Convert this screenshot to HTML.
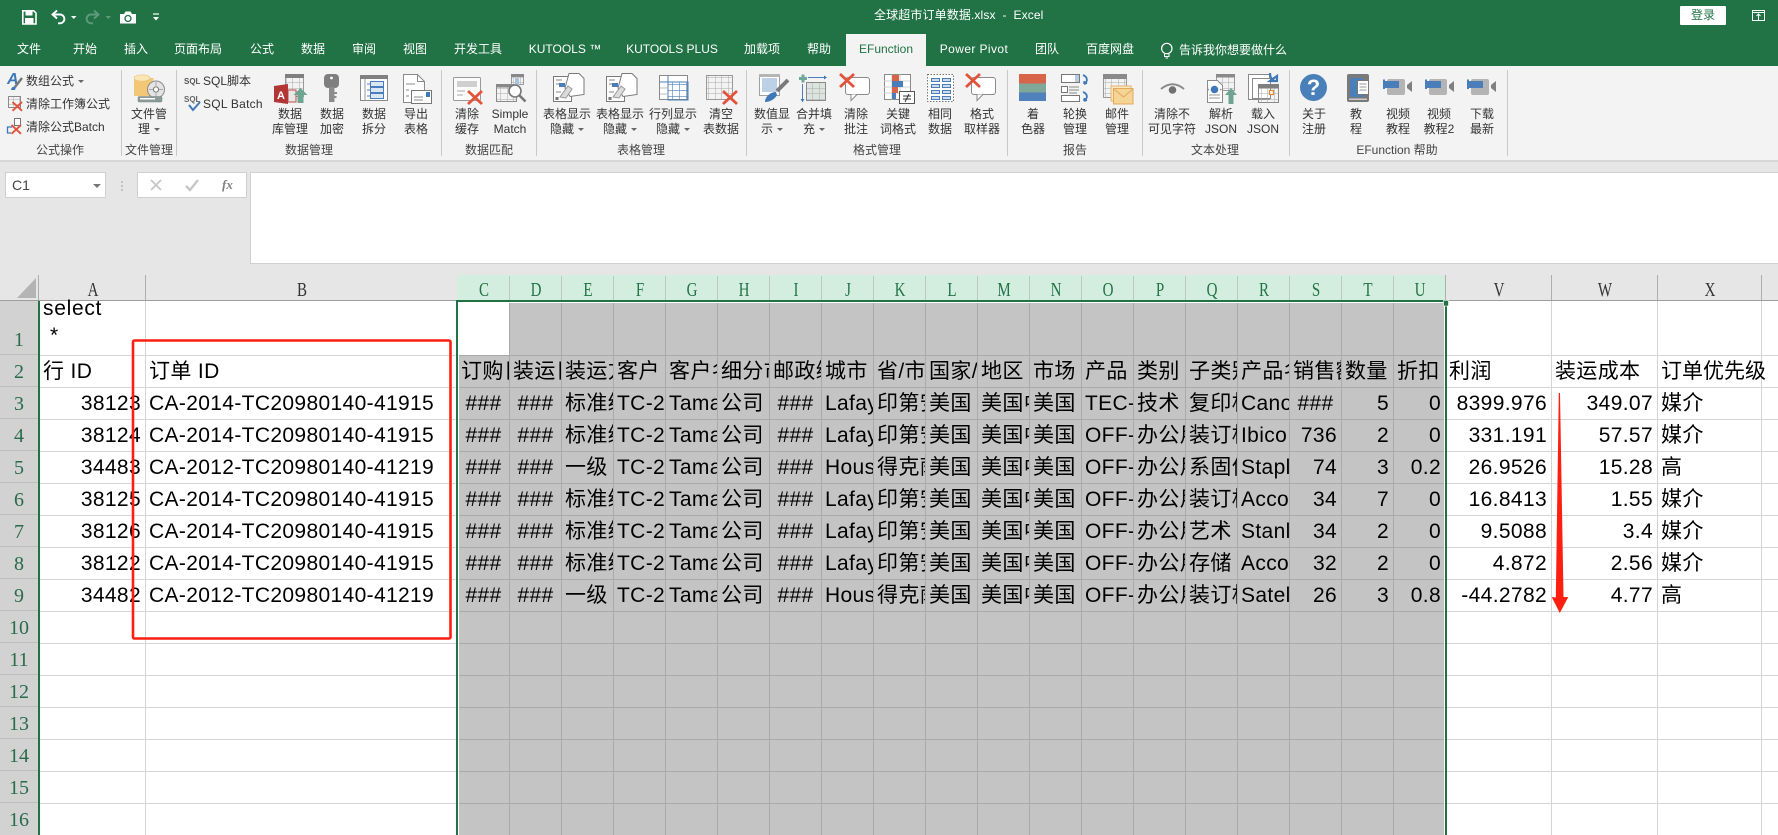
<!DOCTYPE html>
<html lang="zh"><head><meta charset="utf-8"><title>全球超市订单数据.xlsx - Excel</title>
<style>
html,body{margin:0;padding:0;width:1778px;height:835px;overflow:hidden;background:#fff}
body{position:relative;font-family:"Liberation Sans","Noto Sans CJK SC",sans-serif;color:#000}
.abs,.t,.b,.g,.s{position:absolute}
svg{position:absolute;left:0;top:0}
.t{top:40px;line-height:18px;font-size:12px;color:#fff;white-space:nowrap;transform:translateX(-50%)}
.b{top:107px;width:80px;margin-left:-40px;text-align:center;font-size:12px;line-height:15px;color:#333;white-space:nowrap}
.g{top:143px;width:110px;margin-left:-55px;text-align:center;font-size:12px;line-height:15px;color:#444;white-space:nowrap}
.s{font-size:12px;line-height:16px;color:#333;white-space:nowrap}
i.d{display:inline-block;width:0;height:0;border-top:3px solid #666;border-left:3px solid transparent;border-right:3px solid transparent;vertical-align:middle;margin-left:4px}
#hd{position:absolute;left:40px;top:275px;height:26px;display:grid;grid-template-columns:106px 312px repeat(19,52px) 106px 106px 104px;grid-auto-rows:26px;font-family:"Liberation Serif",serif;font-size:20px;line-height:30px;text-align:center;color:#333}
#hd div{transform:scaleX(.75)}
#hd .z{color:#217346}
#rn{position:absolute;left:0;top:301px;width:38px;font-family:"Liberation Serif",serif;font-size:20px;text-align:center;color:#2a6b4b}
#rn div{height:32px;line-height:34px}
#cells{position:absolute;left:40px;top:356px;display:grid;grid-template-columns:106px 312px repeat(19,52px) 106px 106px 104px;grid-auto-rows:32px;font-size:21px;line-height:32px;letter-spacing:.35px}
#cells div{overflow:hidden;white-space:nowrap;padding:0 4px 0 3px;box-sizing:border-box;margin-right:1px}
#cells .r{text-align:right}
#cells .c{text-align:center;padding:0}
#cells .v{overflow:visible;letter-spacing:0}
</style></head><body>

<svg width="1778" height="835" viewBox="0 0 1778 835">
<defs>
<pattern id="pg" width="6.5" height="5.5" patternUnits="userSpaceOnUse"><path d="M6.5 0H0V5.5" fill="none" stroke="#a8a8a8" stroke-width="1"/></pattern>
<pattern id="pb" width="7" height="6" patternUnits="userSpaceOnUse"><path d="M7 0H0V6" fill="none" stroke="#4a7ebb" stroke-width="1.2"/></pattern>
<g id="rx"><path d="M0 0L14 13M14 0L0 13" stroke="#e2533b" stroke-width="2.8" fill="none"/></g>
<g id="tb"><path d="M553.5 76.5h14l4 0v25h-18z" fill="#fdfdfd" stroke="#7a7a7a"/><path d="M556 80h6M556 84h8M556 92h5" stroke="#888"/><rect x="559" y="83" width="6" height="4" fill="#4a7ebb"/><rect x="555.5" y="97" width="3" height="3" fill="#777"/><path d="M565 88L569 73.5h10l5 5v16l-14 2z" fill="#fff" stroke="#7a7a7a"/><path d="M560 97l8-11 4 3-6 9z" fill="#dcdcdc" stroke="#999"/></g>
<g id="bub"><rect x="845.5" y="77.5" width="24" height="17" rx="2.5" fill="#fff" stroke="#8a8a8a"/><path d="M851 94.5v6l6-6" fill="#fff" stroke="#8a8a8a"/><use href="#rx" x="840" y="74"/></g>
<g id="vid"><rect x="1387" y="79" width="18" height="16" rx="2" fill="#b4b4b4"/><path d="M1407 85l5-4v11l-5-4z" fill="#808080"/><rect x="1384" y="81" width="15" height="7" fill="#4a7ebb"/><rect x="1383" y="79.500" width="2" height="9.500" fill="#4a7ebb"/></g>
</defs>

<!-- chrome backgrounds -->
<rect width="1778" height="66" fill="#217346"/>
<rect x="846" y="34" width="80" height="32" fill="#f3f3f3"/>
<rect y="66" width="1778" height="94" fill="#f3f3f3"/>
<rect y="160" width="1778" height="2" fill="#d6d6d6"/>
<rect y="162" width="1778" height="139" fill="#e6e6e6"/>
<rect x="5.5" y="172.5" width="100" height="25" fill="#fff" stroke="#d0d0d0"/>
<rect x="137.5" y="172.5" width="109" height="25" fill="#fff" stroke="#d0d0d0"/>
<rect x="250.5" y="172.5" width="1530" height="91" fill="#fff" stroke="#d0d0d0"/>
<path d="M93 184h8l-4 4z" fill="#777"/>
<circle cx="122" cy="182" r=".9" fill="#aaa"/><circle cx="122" cy="186" r=".9" fill="#aaa"/><circle cx="122" cy="190" r=".9" fill="#aaa"/>
<path d="M151 180l10 10M161 180l-10 10" stroke="#c6c6c6" stroke-width="1.8" fill="none"/>
<path d="M186 186l4 4 8-10" stroke="#c6c6c6" stroke-width="2.4" fill="none"/>

<!-- QAT -->
<path d="M22.8 10.8h11l2.2 2.2V24H22.8z" fill="none" stroke="#fff" stroke-width="1.6"/>
<rect x="25.5" y="10.5" width="7" height="5" fill="#fff"/><rect x="25" y="18" width="8.5" height="6" fill="#fff"/>
<path d="M57 10.5L52.5 14.5L57 18.5M53 14.5H60a4.4 4.4 0 0 1 0 8.8h-2" fill="none" stroke="#fff" stroke-width="1.9"/>
<path d="M71 16h5.5l-2.75 3z" fill="#fff"/>
<path d="M94 10.5L98.5 14.5L94 18.5M98 14.5H91a4.4 4.4 0 0 0 0 8.8h2" fill="none" stroke="#5f9a7d" stroke-width="1.9"/>
<path d="M105.500 16h5.500l-2.750 3z" fill="#5f9a7d"/>
<path d="M120 14h4l1.500-2.500h5l1.500 2.500h4v9.500h-16z" fill="#fff"/><circle cx="128" cy="18.500" r="3" fill="none" stroke="#217346" stroke-width="1.300"/>
<path d="M153 14h6" stroke="#fff" stroke-width="1.200"/><path d="M153 17h6l-3 3.500z" fill="#fff"/>
<rect x="1680" y="6" width="46" height="19" rx="1" fill="#fff"/>
<rect x="1752.500" y="10.500" width="12" height="10" fill="none" stroke="#fff"/><path d="M1753 12.500h11M1758.500 20v-6M1756.500 16l2-2 2 2" stroke="#fff" fill="none"/>
<circle cx="1166.800" cy="48.500" r="5.200" fill="none" stroke="#fff" stroke-width="1.200"/><path d="M1164.500 54v2.500h4.500V54M1165.500 58h2.500" fill="none" stroke="#fff"/>

<!-- ribbon separators -->
<path d="M121.500 70V156M176.500 70V156M441.500 70V156M536.500 70V156M746.500 70V156M1007.500 70V156M1142.500 70V156M1289.500 70V156M1507.500 70V156" stroke="#c9c9c9" stroke-width="1"/>

<!-- left small icons -->
<text x="7" y="84" font-family="Liberation Sans" font-size="16" font-style="italic" font-weight="bold" fill="#3f78b8">A</text>
<path d="M15 87l7-9" stroke="#777" stroke-width="2.500"/><path d="M11 90c0-3 3-4 5-3l-1 3z" fill="#3f78b8"/>
<rect x="8.500" y="96.500" width="12" height="11" fill="url(#pg)" stroke="#8a8a8a"/>
<use href="#rx" transform="translate(12.500 102) scale(.68)"/>
<rect x="14.500" y="118.500" width="6" height="7" fill="#fff" stroke="#777"/><path d="M12 127H7.500v6H11" fill="none" stroke="#3f78b8" stroke-width="1.300"/>
<use href="#rx" transform="translate(11.500 125) scale(.68)"/>

<!-- file mgmt -->
<path d="M134 78v18h12l8-18z" fill="#f2c877"/><rect x="134" y="78" width="16" height="18" fill="#f2c877"/><ellipse cx="142" cy="78" rx="8" ry="3.200" fill="#fae6b4" stroke="#e8c27a" stroke-width=".6"/>
<circle cx="156" cy="89.500" r="8.500" fill="#e4e4e4" stroke="#8a8a8a"/><circle cx="156" cy="89.500" r="2.600" fill="#fff" stroke="#777"/><path d="M156 82v4M156 93v4M149 89.500h4M159 89.500h4" stroke="#aaa"/>
<rect x="138" y="96.500" width="24" height="5.500" rx="1" fill="#8a9a96" stroke="#7a8784" stroke-width=".5"/><rect x="140" y="98" width="15" height="1.500" fill="#fff"/>

<!-- sql -->
<text x="184" y="84" font-family="Liberation Sans" font-size="8" font-weight="bold" fill="#555">SQL</text>
<text x="184" y="102" font-family="Liberation Sans" font-size="8" font-weight="bold" fill="#666">SQL</text>
<path d="M189 105l4 5 7-8" fill="none" stroke="#3f78b8" stroke-width="2"/>

<!-- db mgmt -->
<rect x="285.500" y="74.500" width="18" height="22" fill="url(#pg)" stroke="#999"/><rect x="285" y="74" width="19" height="4" fill="#7f7f7f"/>
<path d="M288 90v12h8V90z" fill="#e8e8e8" stroke="#c04a4a"/>
<path d="M274 86l14-2v20l-14-2z" fill="#b23636"/><text x="277" y="99" font-family="Liberation Sans" font-size="11" font-weight="bold" fill="#fff">A</text>
<path d="M300.500 88l7 7h-4v8h-6v-8h-4z" fill="#6ea592"/>
<!-- key -->
<rect x="324" y="74" width="15" height="14" rx="4" fill="#7f7f7f"/><circle cx="331.500" cy="78" r="1.400" fill="#fff"/><rect x="329" y="87" width="5.500" height="15" fill="#8c8c8c"/><path d="M334.500 92h2.500v2h-2.500zM334.500 96h2v2h-2z" fill="#8c8c8c"/>
<!-- split -->
<rect x="360.500" y="75.500" width="27" height="25" fill="#fdfdfd" stroke="#8a8a8a"/><rect x="360" y="75" width="28" height="4" fill="#808080"/><path d="M365 79v21" stroke="#999"/>
<path d="M367 84h3M367 90h3M367 96h3" stroke="#4a7ebb"/>
<rect x="370.500" y="81.500" width="13" height="5" fill="#dde7f3" stroke="#4a7ebb"/><rect x="370.500" y="87.500" width="13" height="5" fill="#dde7f3" stroke="#4a7ebb"/><rect x="370.500" y="93.500" width="13" height="5" fill="#dde7f3" stroke="#4a7ebb"/>
<!-- export -->
<path d="M403.500 74.500h14l7 7v21h-21z" fill="#fff" stroke="#8a8a8a"/><path d="M417.500 74.500v7h7" fill="none" stroke="#8a8a8a"/><path d="M406 84h9M406 90h3M406 96h3" stroke="#888"/>
<rect x="411.500" y="90.500" width="20" height="13" fill="#fff" stroke="#777"/><path d="M414 97h9M414 100h9" stroke="#888"/><rect x="426" y="92" width="4" height="5" fill="#3f78b8"/>
<!-- clear cache -->
<rect x="453.500" y="77.500" width="27" height="23" rx="1" fill="#fbfbfb" stroke="#999"/><rect x="457" y="81" width="20" height="6" fill="#cfcfcf"/><path d="M457 91h8M457 95h6" stroke="#aaa"/><use href="#rx" x="468" y="91"/>
<!-- simple match -->
<rect x="496.500" y="84.500" width="20" height="17" fill="url(#pg)" stroke="#8a8a8a"/><rect x="496" y="84" width="21" height="3.500" fill="#888"/><rect x="511.500" y="74.500" width="12" height="10" fill="url(#pg)" stroke="#999"/><rect x="511" y="74" width="13" height="3" fill="#888"/><rect x="515" y="78" width="4" height="7" fill="#a9c4df"/>
<circle cx="515" cy="91" r="6" fill="#fff" stroke="#777" stroke-width="1.600"/><path d="M519.500 95.500l6 6" stroke="#777" stroke-width="2.600"/>

<!-- table display -->
<use href="#tb"/><use href="#tb" x="53"/>
<rect x="659.500" y="75.500" width="28" height="24" fill="#fff" stroke="#8a8a8a"/><path d="M659.500 82h28M668 75.500V100" stroke="#4a7ebb"/><rect x="668" y="82" width="20" height="18" fill="url(#pb)" stroke="#4a7ebb"/><path d="M660 88h8M660 94h8" stroke="#bbb"/>
<rect x="706.500" y="75.500" width="26" height="24" fill="url(#pg)" stroke="#999"/><use href="#rx" x="723" y="91"/>

<!-- format -->
<rect x="759.500" y="74.500" width="20" height="21" fill="#fff" stroke="#a0a0a0"/><rect x="762" y="78" width="15" height="14" fill="#bcd0e6"/><rect x="759" y="74" width="21" height="3" fill="#b5b5b5"/>
<path d="M788 80l-11 11" stroke="#7a7a7a" stroke-width="4"/><path d="M765 102c0-5 5-10 11-10l1 3c-2 4-7 7-12 7z" fill="#3f78b8"/>
<path d="M803 74.500v8M799 78.500h8" stroke="#6fa898" stroke-width="3"/>
<path d="M808 77.500h18M802.500 84v18" stroke="#4a7ebb"/><path d="M827 77.500l-3-2v4zM802.500 102l-2-3h4z" fill="#3f78b8"/>
<rect x="806.500" y="82.500" width="19" height="18" fill="#dce4e0"/><rect x="806.500" y="82.500" width="19" height="18" fill="url(#pg)" stroke="#8a8a8a"/>
<use href="#bub"/><use href="#bub" x="126"/>
<rect x="884.500" y="74.500" width="26" height="25" fill="#fff" stroke="#8a8a8a"/><path d="M884 81h26M884 87h26M884 93h26M892 74.500v25M900 74.500v25" stroke="#cfcfcf"/><rect x="892" y="75" width="7" height="6" fill="#d8644a"/><rect x="892" y="81" width="11" height="6" fill="#4a7ebb"/><rect x="892" y="87" width="6" height="6" fill="#d8644a"/><rect x="892" y="93" width="4" height="6" fill="#4a7ebb"/>
<rect x="899.500" y="91.500" width="15" height="12" fill="#fff" stroke="#555"/><path d="M903 96h8M903 99h8M905 102l4-8" stroke="#333" fill="none"/>
<rect x="927.500" y="74.500" width="26" height="27" fill="#fff" stroke="#777" stroke-dasharray="1.500 1.500"/>
<path d="M931.500 78.500h8v3h-8zM942.500 78.500h8v3h-8zM931.500 84.500h8v3h-8zM942.500 84.500h8v3h-8zM931.500 90.500h8v3h-8zM942.500 90.500h8v3h-8zM931.500 96.500h8v3h-8zM942.500 96.500h8v3h-8z" fill="#cfdcec" stroke="#4a7ebb"/>

<!-- report -->
<rect x="1019" y="74" width="27" height="9.500" fill="#d8644a"/><rect x="1019" y="83.500" width="27" height="9" fill="#7fa898"/><rect x="1019" y="92.500" width="27" height="8.500" fill="#4f81bd"/>
<rect x="1061.500" y="74.500" width="18" height="8" fill="#fff" stroke="#777"/><rect x="1075" y="75" width="4" height="7" fill="#b5cce4"/><rect x="1061.500" y="86.500" width="6" height="6" fill="#fff" stroke="#777"/><path d="M1069 87h10M1069 90h10M1069 93h8" stroke="#888"/><rect x="1061.500" y="95.500" width="18" height="6" fill="#fff" stroke="#777"/>
<path d="M1083 75c5 2 5 7 1 9M1084 84l3-1M1084 84l.500-3M1083 92c5 2 5 6 1 9M1084 101l3-1M1084 101l.500-3" fill="none" stroke="#3f78b8" stroke-width="1.800"/>
<rect x="1103.500" y="74.500" width="23" height="23" fill="url(#pg)" stroke="#999"/><rect x="1103" y="74" width="24" height="5" fill="#8a8a8a"/>
<rect x="1111" y="86" width="20" height="15" fill="#fbe6c0" stroke="#e5b36f"/><rect x="1113.500" y="88.500" width="19.500" height="15.500" fill="#f5d494" stroke="#e3a85a"/><path d="M1114 89l9.500 8 9.500-8" fill="none" stroke="#e3a85a"/>

<!-- text processing -->
<path d="M1161 89q11.500-9.500 23 0" fill="none" stroke="#8a8a8a" stroke-width="2"/><circle cx="1172.500" cy="90" r="3.800" fill="#707070"/>
<rect x="1216.500" y="74.500" width="18" height="16" fill="url(#pg)" stroke="#999"/><rect x="1216" y="74" width="19" height="3.500" fill="#8a8a8a"/>
<path d="M1207.500 80.500h10l5 5v17h-15z" fill="#fff" stroke="#8a8a8a"/><circle cx="1214.500" cy="89.500" r="3.800" fill="#3f78b8"/><path d="M1209 89l-1 .5 1 .5M1220 89l1 .5-1 .5M1209 95h11M1209 98h11" stroke="#999" fill="none"/>
<path d="M1231 88l6 7h-3.500v9h-5v-9H1225z" fill="#6ea592"/>
<rect x="1248.500" y="74.500" width="21" height="25" fill="#fff" stroke="#8a8a8a"/><rect x="1252.500" y="78.500" width="18" height="20" fill="#fff" stroke="#8a8a8a"/>
<rect x="1258.500" y="84.500" width="20" height="18" fill="url(#pg)" stroke="#8a8a8a"/><rect x="1258" y="84" width="21" height="4.500" fill="#7f7f7f"/><rect x="1269.500" y="90.500" width="4" height="4" fill="#fff" stroke="#e08a3c" stroke-width="1.300"/>
<path d="M1270 73c0 4 1 6 4 7M1270 81h7v-5z" fill="none" stroke="#3f78b8" stroke-width="2.200"/>

<!-- help -->
<circle cx="1313.500" cy="87.500" r="13.500" fill="#4a80ba"/>
<text x="1313.500" y="95" font-family="Liberation Sans" font-size="22" font-weight="bold" fill="#fff" text-anchor="middle">?</text>
<rect x="1347" y="74" width="22" height="28" rx="2" fill="#7a7a7a"/><rect x="1350" y="78" width="13" height="19" fill="#4a80ba"/><rect x="1357.500" y="80.500" width="11" height="14" fill="#fff" stroke="#777"/><path d="M1359.500 84h7M1359.500 87h7M1359.500 90h7" stroke="#999"/><rect x="1349" y="98.500" width="18" height="1.500" fill="#ccc"/>
<use href="#vid"/><use href="#vid" x="42"/><use href="#vid" x="84"/>

<!-- ===== sheet ===== -->
<!-- headers -->
<rect x="457" y="275" width="988" height="26" fill="#d3eedf"/>
<rect y="301" width="38" height="534" fill="#d2d2d2"/>
<path d="M17 298L36 278V298z" fill="#b4b4b4"/>
<path d="M38.500 275V301M145.500 275V301M1445.500 275V301M1551.500 275V301M1657.500 275V301M1761.500 275V301" stroke="#aeaeae"/>
<path d="M509.500 276V300M561.500 276V300M613.500 276V300M665.500 276V300M717.500 276V300M769.500 276V300M821.500 276V300M873.500 276V300M925.500 276V300M977.500 276V300M1029.500 276V300M1081.500 276V300M1133.500 276V300M1185.500 276V300M1237.500 276V300M1289.500 276V300M1341.500 276V300M1393.500 276V300" stroke="#bcc8c1"/>
<path d="M0 300.500H457M1447 300.500H1778" stroke="#9e9e9e"/>
<path d="M0 354.500H38M0 386.500H38M0 418.500H38M0 450.500H38M0 482.500H38M0 514.500H38M0 546.500H38M0 578.500H38M0 610.500H38M0 642.500H38M0 674.500H38M0 706.500H38M0 738.500H38M0 770.500H38M0 802.500H38" stroke="#bdbdbd"/>
<!-- light grid -->
<path d="M145.500 301V835M457.500 301V835M1551.500 301V835M1657.500 301V835M1761.500 301V835M40 355.500H1778M40 387.500H1778M40 419.500H1778M40 451.500H1778M40 483.500H1778M40 515.500H1778M40 547.500H1778M40 579.500H1778M40 611.500H1778M40 643.500H1778M40 675.500H1778M40 707.500H1778M40 739.500H1778M40 771.500H1778M40 803.500H1778" stroke="#d4d4d4"/>
<!-- selected area -->
<rect x="459" y="303" width="985" height="532" fill="#c4c4c4"/>
<rect x="458" y="303" width="51" height="52" fill="#fff"/>
<path d="M509.500 303V835M561.500 303V835M613.500 303V835M665.500 303V835M717.500 303V835M769.500 303V835M821.500 303V835M873.500 303V835M925.500 303V835M977.500 303V835M1029.500 303V835M1081.500 303V835M1133.500 303V835M1185.500 303V835M1237.500 303V835M1289.500 303V835M1341.500 303V835M1393.500 303V835" stroke="#aaa"/>
<path d="M459 355.500H1444M459 387.500H1444M459 419.500H1444M459 451.500H1444M459 483.500H1444M459 515.500H1444M459 547.500H1444M459 579.500H1444M459 611.500H1444M459 643.500H1444M459 675.500H1444M459 707.500H1444M459 739.500H1444M459 771.500H1444M459 803.500H1444" stroke="#aaa"/>
<rect x="458" y="302" width="1" height="533" fill="#fff"/><rect x="1444" y="302" width="1" height="533" fill="#fff"/>
<rect x="456" y="300" width="990" height="2" fill="#217346"/>
<rect x="456" y="300" width="2" height="535" fill="#217346"/>
<rect x="1445" y="300" width="2" height="535" fill="#217346"/>
<rect x="1443.500" y="300.500" width="5" height="5.500" fill="#217346" stroke="#fff" stroke-width=".6"/>
<rect x="38" y="301" width="2" height="534" fill="#217346"/>
</svg>

<!-- tabs -->
<div class="t" style="left:29px">文件</div><div class="t" style="left:85px">开始</div><div class="t" style="left:136px">插入</div><div class="t" style="left:198px">页面布局</div><div class="t" style="left:262px">公式</div><div class="t" style="left:313px">数据</div><div class="t" style="left:364px">审阅</div><div class="t" style="left:415px">视图</div><div class="t" style="left:478px">开发工具</div><div class="t" style="left:565px">KUTOOLS ™</div><div class="t" style="left:672px">KUTOOLS PLUS</div><div class="t" style="left:762px">加载项</div><div class="t" style="left:819px">帮助</div><div class="t" style="left:886px;color:#217346">EFunction</div><div class="t" style="left:974px;letter-spacing:.4px">Power Pivot</div><div class="t" style="left:1047px">团队</div><div class="t" style="left:1110px">百度网盘</div><div class="t" style="left:1233px;top:41px">告诉我你想要做什么</div>
<div class="abs" style="left:874px;top:6px;font-size:12px;line-height:18px;color:#fff;white-space:pre;letter-spacing:.12px">全球超市订单数据.xlsx  -  Excel</div>
<div class="abs" style="left:1680px;top:6px;width:46px;text-align:center;font-size:12px;line-height:19px;color:#217346">登录</div>

<!-- small ribbon text -->
<div class="s" style="left:26px;top:73px">数组公式<i class="d"></i></div>
<div class="s" style="left:26px;top:96px">清除工作簿公式</div>
<div class="s" style="left:26px;top:119px">清除公式Batch</div>
<div class="s" style="left:203px;top:73px">SQL脚本</div>
<div class="s" style="left:203px;top:96px;letter-spacing:.25px">SQL Batch</div>

<!-- large button labels -->
<div class="b" style="left:149px">文件管<br>理<i class="d"></i></div>
<div class="b" style="left:290px">数据<br>库管理</div>
<div class="b" style="left:332px">数据<br>加密</div>
<div class="b" style="left:374px">数据<br>拆分</div>
<div class="b" style="left:416px">导出<br>表格</div>
<div class="b" style="left:467px">清除<br>缓存</div>
<div class="b" style="left:510px">Simple<br>Match</div>
<div class="b" style="left:567px">表格显示<br>隐藏<i class="d"></i></div>
<div class="b" style="left:620px">表格显示<br>隐藏<i class="d"></i></div>
<div class="b" style="left:673px">行列显示<br>隐藏<i class="d"></i></div>
<div class="b" style="left:721px">清空<br>表数据</div>
<div class="b" style="left:772px">数值显<br>示<i class="d"></i></div>
<div class="b" style="left:814px">合并填<br>充<i class="d"></i></div>
<div class="b" style="left:856px">清除<br>批注</div>
<div class="b" style="left:898px">关键<br>词格式</div>
<div class="b" style="left:940px">相同<br>数据</div>
<div class="b" style="left:982px">格式<br>取样器</div>
<div class="b" style="left:1033px">着<br>色器</div>
<div class="b" style="left:1075px">轮换<br>管理</div>
<div class="b" style="left:1117px">邮件<br>管理</div>
<div class="b" style="left:1172px">清除不<br>可见字符</div>
<div class="b" style="left:1221px">解析<br>JSON</div>
<div class="b" style="left:1263px">载入<br>JSON</div>
<div class="b" style="left:1314px">关于<br>注册</div>
<div class="b" style="left:1356px">教<br>程</div>
<div class="b" style="left:1398px">视频<br>教程</div>
<div class="b" style="left:1439px">视频<br>教程2</div>
<div class="b" style="left:1482px">下载<br>最新</div>

<!-- group labels -->
<div class="g" style="left:60px">公式操作</div><div class="g" style="left:149px">文件管理</div><div class="g" style="left:309px">数据管理</div><div class="g" style="left:489px">数据匹配</div><div class="g" style="left:641px">表格管理</div><div class="g" style="left:877px">格式管理</div><div class="g" style="left:1075px">报告</div><div class="g" style="left:1215px">文本处理</div><div class="g" style="left:1397px">EFunction 帮助</div>

<!-- formula bar -->
<div class="abs" style="left:12px;top:176px;font-size:14px;line-height:18px;color:#444">C1</div>
<div class="abs" style="left:222px;top:176px;font-family:'Liberation Serif',serif;font-style:italic;font-weight:bold;font-size:13px;line-height:18px;color:#808080">fx</div>

<!-- column headers -->
<div id="hd"><div>A</div><div>B</div><div class="z">C</div><div class="z">D</div><div class="z">E</div><div class="z">F</div><div class="z">G</div><div class="z">H</div><div class="z">I</div><div class="z">J</div><div class="z">K</div><div class="z">L</div><div class="z">M</div><div class="z">N</div><div class="z">O</div><div class="z">P</div><div class="z">Q</div><div class="z">R</div><div class="z">S</div><div class="z">T</div><div class="z">U</div><div>V</div><div>W</div><div>X</div></div>

<!-- row numbers -->
<div id="rn"><div style="height:54px;line-height:78px">1</div><div>2</div><div>3</div><div>4</div><div>5</div><div>6</div><div>7</div><div>8</div><div>9</div><div>10</div><div>11</div><div>12</div><div>13</div><div>14</div><div>15</div><div>16</div></div>

<!-- A1 -->
<div class="abs" style="left:43px;top:295px;font-size:21px;line-height:28px;letter-spacing:.7px">select</div>
<div class="abs" style="left:50px;top:322px;font-size:21px;line-height:28px">*</div>

<!-- data cells -->
<div id="cells">
<div>行 ID</div><div>订单 ID</div><div>订购日期</div><div>装运日期</div><div>装运方式</div><div>客户 ID</div><div>客户名称</div><div>细分市场</div><div>邮政编码</div><div>城市</div><div>省/市/自治区</div><div>国家/地区</div><div>地区</div><div>市场</div><div>产品 ID</div><div>类别</div><div>子类别</div><div>产品名称</div><div>销售额</div><div>数量</div><div>折扣</div><div>利润</div><div>装运成本</div><div class="v">订单优先级</div>

<div class="r">38123</div><div>CA-2014-TC20980140-41915</div><div class="c">###</div><div class="c">###</div><div>标准级</div><div>TC-20980</div><div>Tamara</div><div>公司</div><div class="c">###</div><div>Lafayette</div><div>印第安纳</div><div>美国</div><div>美国中部</div><div>美国</div><div>TEC-CO</div><div>技术</div><div>复印机</div><div>Canon</div><div class="c">###</div><div class="r">5</div><div class="r">0</div><div class="r">8399.976</div><div class="r">349.07</div><div>媒介</div>

<div class="r">38124</div><div>CA-2014-TC20980140-41915</div><div class="c">###</div><div class="c">###</div><div>标准级</div><div>TC-20980</div><div>Tamara</div><div>公司</div><div class="c">###</div><div>Lafayette</div><div>印第安纳</div><div>美国</div><div>美国中部</div><div>美国</div><div>OFF-BI</div><div>办公用品</div><div>装订机</div><div>Ibico</div><div class="r">736</div><div class="r">2</div><div class="r">0</div><div class="r">331.191</div><div class="r">57.57</div><div>媒介</div>

<div class="r">34483</div><div>CA-2012-TC20980140-41219</div><div class="c">###</div><div class="c">###</div><div>一级</div><div>TC-20980</div><div>Tamara</div><div>公司</div><div class="c">###</div><div>Houston</div><div>得克萨斯</div><div>美国</div><div>美国中部</div><div>美国</div><div>OFF-FA</div><div>办公用品</div><div>系固件</div><div>Staples</div><div class="r">74</div><div class="r">3</div><div class="r">0.2</div><div class="r">26.9526</div><div class="r">15.28</div><div>高</div>

<div class="r">38125</div><div>CA-2014-TC20980140-41915</div><div class="c">###</div><div class="c">###</div><div>标准级</div><div>TC-20980</div><div>Tamara</div><div>公司</div><div class="c">###</div><div>Lafayette</div><div>印第安纳</div><div>美国</div><div>美国中部</div><div>美国</div><div>OFF-BI</div><div>办公用品</div><div>装订机</div><div>Acco</div><div class="r">34</div><div class="r">7</div><div class="r">0</div><div class="r">16.8413</div><div class="r">1.55</div><div>媒介</div>

<div class="r">38126</div><div>CA-2014-TC20980140-41915</div><div class="c">###</div><div class="c">###</div><div>标准级</div><div>TC-20980</div><div>Tamara</div><div>公司</div><div class="c">###</div><div>Lafayette</div><div>印第安纳</div><div>美国</div><div>美国中部</div><div>美国</div><div>OFF-AR</div><div>办公用品</div><div>艺术</div><div>Stanley</div><div class="r">34</div><div class="r">2</div><div class="r">0</div><div class="r">9.5088</div><div class="r">3.4</div><div>媒介</div>

<div class="r">38122</div><div>CA-2014-TC20980140-41915</div><div class="c">###</div><div class="c">###</div><div>标准级</div><div>TC-20980</div><div>Tamara</div><div>公司</div><div class="c">###</div><div>Lafayette</div><div>印第安纳</div><div>美国</div><div>美国中部</div><div>美国</div><div>OFF-ST</div><div>办公用品</div><div>存储</div><div>Acco</div><div class="r">32</div><div class="r">2</div><div class="r">0</div><div class="r">4.872</div><div class="r">2.56</div><div>媒介</div>

<div class="r">34482</div><div>CA-2012-TC20980140-41219</div><div class="c">###</div><div class="c">###</div><div>一级</div><div>TC-20980</div><div>Tamara</div><div>公司</div><div class="c">###</div><div>Houston</div><div>得克萨斯</div><div>美国</div><div>美国中部</div><div>美国</div><div>OFF-BI</div><div>办公用品</div><div>装订机</div><div>Satellite</div><div class="r">26</div><div class="r">3</div><div class="r">0.8</div><div class="r">-44.2782</div><div class="r">4.77</div><div>高</div>
</div>

<!-- annotations -->
<svg width="1778" height="835" viewBox="0 0 1778 835" style="pointer-events:none">
<rect x="133" y="340.500" width="317.500" height="298" rx="1.500" fill="none" stroke="#ff1f10" stroke-width="2.600"/>
<path d="M1558.800 393H1560L1563.500 597L1568.300 597L1559.800 613L1551.700 597L1555.800 597.500z" fill="#ff1f10"/>
</svg>
</body></html>
